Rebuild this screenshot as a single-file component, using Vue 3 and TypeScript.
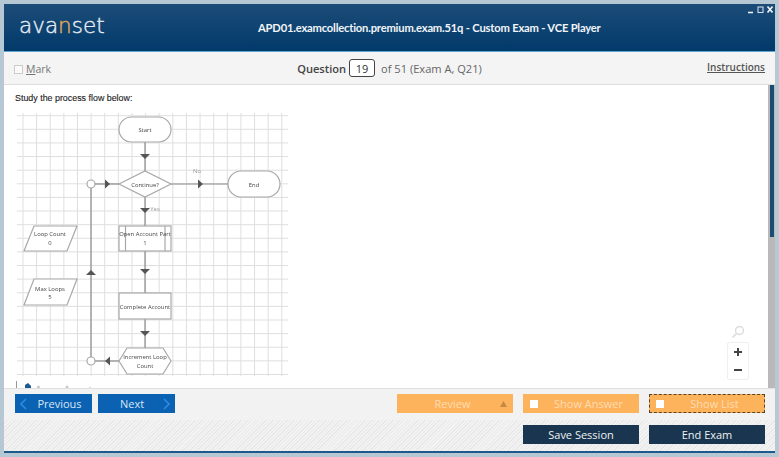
<script setup lang="ts">
const gridX: number[] = Array.from({ length: 20 }, (_, i) => 23 + i * 13.62)
const gridY: number[] = Array.from({ length: 20 }, (_, i) => 115.7 + i * 13.62)
const gridW = 288
const arrows: string[] = [
  '140,154 150,154 145,159',
  '140,208 150,208 145,213',
  '140,269 150,269 145,274',
  '140,331 150,331 145,336',
  '105,179.5 110,184 105,188.5',
  '198,179.5 203,184 198,188.5',
  '110,356.5 105,361 110,365.5',
  '86,275 96,275 91,270'
]
const wires: [number, number, number, number][] = [
  [145, 142, 145, 171],
  [145, 197, 145, 226],
  [145, 251, 145, 293],
  [145, 319, 145, 348],
  [95, 184, 119, 184],
  [171, 184, 228, 184],
  [95, 361, 119, 361],
  [91, 188, 91, 357]
]
</script>

<template>
  <div class="frame">
    <header class="head">
      <div class="logo">ava<span class="gold">n</span>set</div>
      <div class="title">APD01.examcollection.premium.exam.51q - Custom Exam - VCE Player</div>
      <div class="win">
        <svg width="26" height="9" viewBox="0 0 26 9">
          <path d="M1 7.5h5" stroke="#e8eef3" stroke-width="1.6" />
          <rect x="11" y="2" width="5" height="5.5" fill="none" stroke="#cfdbe5" stroke-width="1.1" />
          <path d="M20.5 1.5l5 6M25.5 1.5l-5 6" stroke="#f2f5f8" stroke-width="1.6" />
        </svg>
      </div>
    </header>

    <div class="toolbar">
      <div class="mark"><span class="check"></span><span><u>M</u>ark</span></div>
      <div class="question">
        <b>Question</b><span class="num">19</span><span class="of">of 51 (Exam A, Q21)</span>
      </div>
      <a class="instr">Instructions</a>
    </div>

    <main class="body">
      <div class="content">
        <p class="study">Study the process flow below:</p>
        <svg class="chart" width="300" height="283" viewBox="0 105 300 283">
          <g stroke="#dfdfdf" stroke-width="1">
            <line v-for="x in gridX" :key="'v' + x" :x1="x" :x2="x" y1="113" y2="376" />
            <line v-for="y in gridY" :key="'h' + y" x1="17" :x2="gridW" :y1="y" :y2="y" />
          </g>
          <g stroke="#8a8a8a" stroke-width="1.2">
            <line v-for="(w, i) in wires" :key="i" :x1="w[0]" :y1="w[1]" :x2="w[2]" :y2="w[3]" />
          </g>
          <polygon v-for="p in arrows" :key="p" :points="p" fill="#555" />
          <g fill="#fff" stroke="#a8a8a8" stroke-width="1.2">
            <rect x="119" y="117" width="52" height="25" rx="12.5" />
            <polygon points="119,184 145,171 171,184 145,197" />
            <rect x="228" y="171" width="52" height="26" rx="13" />
            <rect x="119" y="226" width="52" height="25" />
            <line x1="125.5" y1="226" x2="125.5" y2="251" />
            <line x1="165" y1="226" x2="165" y2="251" />
            <rect x="119" y="293" width="52" height="26" />
            <polygon points="119,361 127,348 163,348 171,361 163,374 127,374" />
            <polygon points="34,226 77,226 67,251 24,251" />
            <polygon points="34,279 77,279 67,305 24,305" />
            <circle cx="91" cy="184" r="4" />
            <circle cx="91" cy="361" r="4" />
          </g>
          <g class="lbl" text-anchor="middle">
            <text x="145" y="132">Start</text>
            <text x="145" y="186.5">Continue?</text>
            <text x="254" y="186.5">End</text>
            <text x="145" y="236">Open Account Part</text>
            <text x="145" y="245">1</text>
            <text x="145" y="308.5">Complete Account</text>
            <text x="145" y="359">Increment Loop</text>
            <text x="145" y="367.5">Count</text>
            <text x="50" y="236">Loop Count</text>
            <text x="50" y="245">0</text>
            <text x="50" y="291">Max Loops</text>
            <text x="50" y="299">5</text>
            <text x="197" y="173" class="faint">No</text>
            <text x="155" y="211" class="faint">Yes</text>
          </g>
          <line x1="16.5" y1="381" x2="16.5" y2="388" stroke="#999" />
          <path d="M25 388v-3l3-2 3 3v2z" fill="#1d5a8f" />
          <circle cx="38.5" cy="387" r="1.5" fill="#ccc" />
          <circle cx="67" cy="387" r="1.5" fill="#ccc" />
          <circle cx="90" cy="387.5" r="1" fill="#ddd" />
        </svg>

        <div class="zoomer">
          <svg class="glass" width="14" height="14" viewBox="0 0 14 14">
            <circle cx="8.5" cy="5.5" r="4" fill="none" stroke="#dcdcdc" stroke-width="1.4" />
            <path d="M5.5 8.5L1.5 12.5" stroke="#e2e2e2" stroke-width="2" />
          </svg>
          <div class="zoombox">
            <svg width="10" height="10" viewBox="0 0 10 10">
              <path d="M1 5h8M5 1v8" stroke="#444" stroke-width="2" />
            </svg>
            <svg width="10" height="10" viewBox="0 0 10 10">
              <path d="M1 5h8" stroke="#444" stroke-width="2" />
            </svg>
          </div>
        </div>
      </div>
      <div class="scroll"><div class="thumb"></div></div>
    </main>

    <section class="row-a">
      <div class="nav">
        <button class="blue prev">
          <svg width="7" height="12" viewBox="0 0 7 12"><path d="M6 1L1 6l5 5" fill="none" stroke="#2b8be3" stroke-width="1.6" /></svg>
          <span>Previous</span>
        </button>
        <button class="blue next">
          <span>Next</span>
          <svg width="7" height="12" viewBox="0 0 7 12"><path d="M1 1l5 5-5 5" fill="none" stroke="#2b8be3" stroke-width="1.6" /></svg>
        </button>
      </div>
      <div class="tools">
        <button class="orange">
          <span>Review</span>
          <svg width="7" height="6" viewBox="0 0 7 6"><path d="M0 6l3.5-6L7 6z" fill="#c48a42" /></svg>
        </button>
        <button class="orange check-btn"><em></em><span>Show Answer</span></button>
        <button class="orange check-btn dashed"><em></em><span>Show List</span></button>
      </div>
    </section>

    <section class="row-b">
      <button class="dark">Save Session</button>
      <button class="dark">End Exam</button>
    </section>
  </div>
</template>

<style>
html, body { margin: 0; background: #b6c8d3; }
</style>

<style scoped>
* { box-sizing: border-box; }
.frame {
  width: 779px; height: 457px; padding: 4px;
  display: flex; flex-direction: column; overflow: hidden;
  background: #b6c8d3; font-family: "Open Sans", "Noto Sans", sans-serif;
}
.head {
  height: 48px; flex: none; display: flex; align-items: center;
  background: linear-gradient(#1d4c78, #013a6b);
  border-bottom: 1px solid #5da6cc; padding-left: 15px;
}
.logo {
  width: 239px; font: 200 21.5px/1 "DejaVu Sans", sans-serif;
  color: #e6edf2; margin-top: -4px; -webkit-text-stroke: 0.4px #e6edf2;
}
.gold { color: #e3ad58; -webkit-text-stroke-color: #e3ad58; }
.title { font: 700 11.2px Lato, sans-serif; letter-spacing: -0.19px; color: #f1f5f8; margin-top: -1px; }
.win { margin-left: auto; align-self: flex-start; margin-top: 1px; padding-right: 2px; line-height: 0; }
.toolbar {
  height: 33px; flex: none; display: grid; grid-template-columns: 1fr auto 1fr;
  align-items: center; background: #f4f4f4; border-bottom: 1px solid #dedede; padding: 0 10px;
}
.mark { display: flex; align-items: center; gap: 3px; font-size: 10.5px; color: #777; margin-top: 2px; }
.check { width: 9px; height: 9px; border: 1px solid #ccc; background: #fafafa; }
.question { display: flex; align-items: center; font-size: 11.1px; color: #666; }
.question b { font-weight: 600; color: #444; }
.num {
  width: 26px; height: 18px; margin: 0 6px 0 3px; border: 1px solid #444; border-radius: 3px;
  background: #fff; color: #333; font-size: 11px; display: flex; align-items: center; justify-content: center;
}
.instr { justify-self: end; font-size: 10px; font-weight: 600; color: #555; text-decoration: underline; margin-top: -3px; }
.body { height: 303px; flex: none; display: flex; background: #fff; }
.content { flex: 1; position: relative; overflow: hidden; }
.study { margin: 0; padding: 7px 0 0 11px; font: 8.9px/12px "Liberation Sans", sans-serif; color: #222; -webkit-text-stroke: 0.12px #222; }
.chart { display: block; margin: 1px 0 0 -4px; filter: blur(0.35px); }
.lbl text { font: 5.9px "Open Sans", sans-serif; fill: #444; }
.lbl .faint { fill: #999; }
.zoomer {
  position: absolute; left: 721px; top: 240px; width: 25px;
  display: flex; flex-direction: column; align-items: center; gap: 3px;
}
.zoombox {
  width: 22px; height: 38px; border: 1px solid #efefef; border-radius: 2px;
  display: flex; flex-direction: column; align-items: center; gap: 8px; padding: 4px 0;
}
.scroll { width: 7px; flex: none; background: #b9b9b9; padding: 0 1px 0 2px; }
.thumb { height: 152px; background: #1d4a70; }
.row-a {
  height: 32px; flex: none; display: flex; justify-content: space-between; align-items: flex-start;
  background: #f2f2f2; border-top: 1px solid #e0e0e0; padding: 5px 10px 0 11px;
}
.nav, .tools { display: flex; gap: 10px; }
.nav { gap: 6px; }
button {
  height: 19px; padding: 0; border: 0; display: flex; align-items: center;
  font: 11px "Open Sans", sans-serif;
}
button span { flex: 1; text-align: center; }
.blue { width: 77px; background: #0b62b3; color: #d7e7f3; }
.prev { padding: 0 0 0 5px; }
.next { padding: 0 5px 0 0; }
.next span { padding-left: 9px; padding-right: 6px; }
.orange { width: 116px; background: #fdb35c; color: #ffdcb3; padding: 0 6px 0 8px; }
.check-btn { padding: 0 0 0 7px; }
.orange em { width: 8px; height: 8px; background: #fff; flex: none; }
.dashed { outline: 1.5px dashed #5a4326; outline-offset: -1.5px; }
.row-b {
  flex: 1; display: flex; justify-content: flex-end; gap: 10px; padding: 5px 10px 0 0;
  border-bottom: 2px solid #1d5a8a;
  background: repeating-linear-gradient(135deg, #e8e8e8 0 1px, #f3f3f3 1px 2.5px);
}
.dark { width: 116px; background: #1a354f; color: #eef2f5; justify-content: center; font-size: 11px; }
</style>
